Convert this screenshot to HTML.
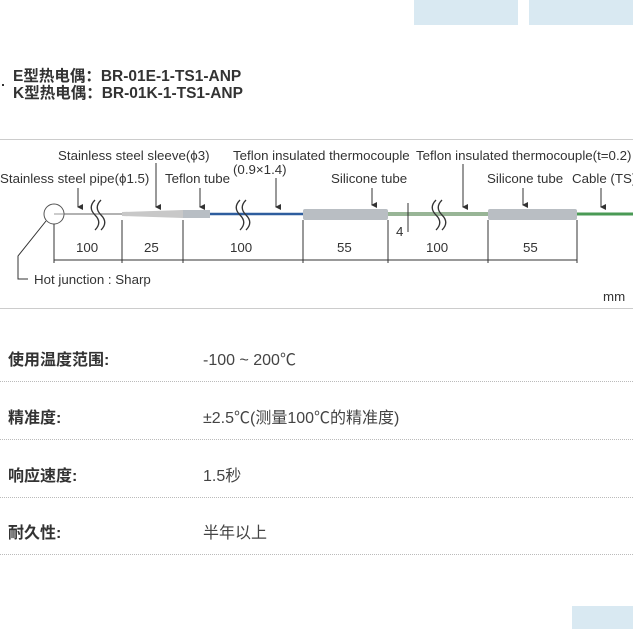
<!DOCTYPE html>
<html><head><meta charset="utf-8"><style>
*{margin:0;padding:0;box-sizing:border-box}
body{width:633px;height:629px;overflow:hidden;background:#fff;position:relative;font-family:"Liberation Sans","Noto Sans CJK SC",sans-serif;color:#333}
.btn{position:absolute;background:#d9e9f2}
.title{position:absolute;left:13px;top:68px;font-size:15.5px;font-weight:bold;line-height:17px;color:#333}
.row{position:absolute;left:0;width:633px;height:58px;border-bottom:1px dotted #bbb;font-size:16px}
.row .l{position:absolute;left:8px;bottom:11px;font-weight:bold;color:#333}
.row .v{position:absolute;left:203px;bottom:11px;color:#444}
svg text{font-family:"Liberation Sans",sans-serif;font-size:13.3px;fill:#333}
</style></head><body>
<div class="btn" style="left:414px;top:0;width:104px;height:25px"></div>
<div class="btn" style="left:529px;top:0;width:104px;height:25px"></div>
<div style="position:absolute;left:2px;top:84px;width:2px;height:2px;background:#333"></div>
<div class="title">E型热电偶：BR-01E-1-TS1-ANP<br>K型热电偶：BR-01K-1-TS1-ANP</div>
<svg style="position:absolute;left:0;top:0" width="633" height="320">
<defs><marker id="a" markerWidth="6" markerHeight="6" refX="3" refY="5" orient="auto-start-reverse" markerUnits="userSpaceOnUse"><path d="M0 0L3 6L6 0z" fill="#333"/></marker></defs>
<line x1="0" y1="139.5" x2="633" y2="139.5" stroke="#ccc"/>
<line x1="0" y1="308.5" x2="633" y2="308.5" stroke="#ccc"/>
<text x="58" y="160">Stainless steel sleeve(ϕ3)</text>
<text x="233" y="160">Teflon insulated thermocouple</text>
<text x="233" y="174">(0.9×1.4)</text>
<text x="416" y="160">Teflon insulated thermocouple(t=0.2)</text>
<text x="0" y="183">Stainless steel pipe(ϕ1.5)</text>
<text x="165" y="183">Teflon tube</text>
<text x="331" y="183">Silicone tube</text>
<text x="487" y="183">Silicone tube</text>
<text x="572" y="183">Cable (TS)</text>
<g stroke="#333" stroke-width="1" fill="none" marker-end="url(#a)">
<line x1="156" y1="163" x2="156" y2="207"/><line x1="78" y1="188" x2="78" y2="207"/>
<line x1="200" y1="188" x2="200" y2="207"/><line x1="276" y1="178" x2="276" y2="207"/>
<line x1="372" y1="188" x2="372" y2="205"/><line x1="463" y1="164" x2="463" y2="207"/>
<line x1="523" y1="188" x2="523" y2="205"/><line x1="601" y1="188" x2="601" y2="207"/>
</g>
<line x1="64" y1="214" x2="122" y2="214" stroke="#999" stroke-width="1.5"/>
<polygon points="122,212 183,210 183,218 122,216" fill="#c8c8c8"/>
<rect x="183" y="210" width="27" height="8" fill="#b8bec4"/>
<line x1="210" y1="214" x2="303" y2="214" stroke="#2e5d9e" stroke-width="2.5"/>
<rect x="303" y="209" width="85" height="11" rx="2" fill="#b9bec3"/>
<line x1="388" y1="214" x2="488" y2="214" stroke="#98b596" stroke-width="4"/>
<rect x="488" y="209" width="89" height="11" rx="2" fill="#b9bec3"/>
<line x1="577" y1="214" x2="633" y2="214" stroke="#4a9a55" stroke-width="3"/>
<circle cx="54" cy="214" r="10" fill="#fff" stroke="#555"/>
<line x1="54" y1="214" x2="64" y2="214" stroke="#999"/>
<g fill="none" stroke="#333" stroke-width="1.3">
<path d="M95 200c-5 5-5 10 0 15s5 10 0 15"/><path d="M101 200c-5 5-5 10 0 15s5 10 0 15"/>
<path d="M240 200c-5 5-5 10 0 15s5 10 0 15"/><path d="M246 200c-5 5-5 10 0 15s5 10 0 15"/>
<path d="M436 200c-5 5-5 10 0 15s5 10 0 15"/><path d="M442 200c-5 5-5 10 0 15s5 10 0 15"/>
</g>
<g stroke="#333" stroke-width="1">
<line x1="54" y1="224" x2="54" y2="263"/><line x1="122" y1="220" x2="122" y2="263"/>
<line x1="183" y1="220" x2="183" y2="263"/><line x1="303" y1="220" x2="303" y2="263"/>
<line x1="388" y1="220" x2="388" y2="263"/><line x1="488" y1="220" x2="488" y2="263"/>
<line x1="577" y1="220" x2="577" y2="263"/>
<line x1="54" y1="260" x2="577" y2="260"/>
<line x1="408" y1="203" x2="408" y2="232"/>
<polyline points="46,221 18,256 18,279 28,279" fill="none"/>
</g>
<text x="76" y="252" font-size="14">100</text><text x="144" y="252" font-size="14">25</text>
<text x="230" y="252" font-size="14">100</text><text x="337" y="252" font-size="14">55</text>
<text x="426" y="252" font-size="14">100</text><text x="523" y="252" font-size="14">55</text>
<text x="396" y="236" font-size="14">4</text>
<text x="34" y="284" font-size="13.5">Hot junction : Sharp</text>
<text x="603" y="301">mm</text>
</svg>
<div class="row" style="top:324px"><span class="l">使用温度范围:</span><span class="v">-100 ~ 200℃</span></div>
<div class="row" style="top:382px"><span class="l">精准度:</span><span class="v">±2.5℃(测量100℃的精准度)</span></div>
<div class="row" style="top:440px"><span class="l">响应速度:</span><span class="v">1.5秒</span></div>
<div class="row" style="top:497px"><span class="l">耐久性:</span><span class="v">半年以上</span></div>
<div class="btn" style="left:572px;top:606px;width:61px;height:23px"></div>
</body></html>
